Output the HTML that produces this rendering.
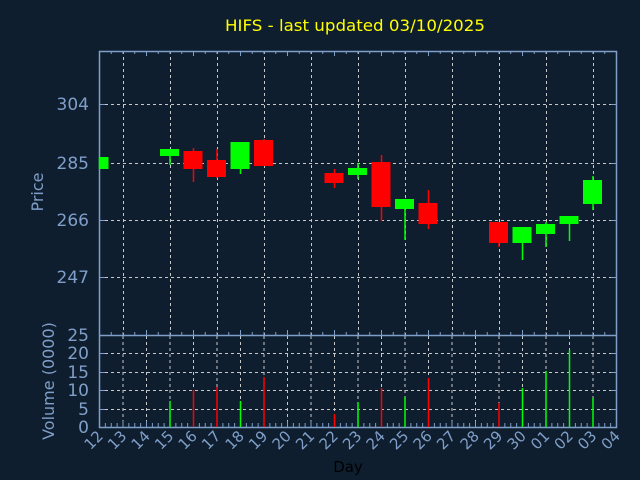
<!DOCTYPE html>
<html><head><meta charset="utf-8"><style>
html,body{margin:0;padding:0;background:#0f1e2f;}
svg{display:block;}
</style></head><body>
<svg width="640" height="480" xmlns="http://www.w3.org/2000/svg" font-family="'DejaVu Sans','Liberation Sans',sans-serif">
<rect width="640" height="480" fill="#0f1e2f"/>
<text x="355" y="31" fill="#ffff00" font-size="16" text-anchor="middle" textLength="260" lengthAdjust="spacingAndGlyphs">HIFS - last updated 03/10/2025</text>
<g id="grid" stroke="#c8c8c8" stroke-width="1" stroke-dasharray="3,3" fill="none">
<!-- price horizontal -->
<line x1="99" y1="104.5" x2="617" y2="104.5"/>
<line x1="99" y1="163.5" x2="617" y2="163.5"/>
<line x1="99" y1="220.5" x2="617" y2="220.5"/>
<line x1="99" y1="277.5" x2="617" y2="277.5"/>
<!-- price vertical every 2 days -->
<line x1="123.5" y1="51" x2="123.5" y2="335"/>
<line x1="170.5" y1="51" x2="170.5" y2="335"/>
<line x1="217.5" y1="51" x2="217.5" y2="335"/>
<line x1="264.5" y1="51" x2="264.5" y2="335"/>
<line x1="311.5" y1="51" x2="311.5" y2="335"/>
<line x1="358.5" y1="51" x2="358.5" y2="335"/>
<line x1="405.5" y1="51" x2="405.5" y2="335"/>
<line x1="452.5" y1="51" x2="452.5" y2="335"/>
<line x1="499.5" y1="51" x2="499.5" y2="335"/>
<line x1="546.5" y1="51" x2="546.5" y2="335"/>
<line x1="593.5" y1="51" x2="593.5" y2="335"/>
<!-- volume horizontal -->
<line x1="99" y1="353.5" x2="617" y2="353.5"/>
<line x1="99" y1="372.5" x2="617" y2="372.5"/>
<line x1="99" y1="390.5" x2="617" y2="390.5"/>
<line x1="99" y1="409.5" x2="617" y2="409.5"/>
</g>
<g stroke="#c8c8c8" stroke-width="1" stroke-dasharray="3,3" id="vv"></g>
<g stroke="#7f9fc8" stroke-width="1" id="ticks"></g>
<!-- frame -->
<rect x="99.5" y="51.5" width="517" height="376" fill="none" stroke="#7f9fc8" stroke-width="1.5"/>
<line x1="99" y1="335.5" x2="617" y2="335.5" stroke="#7f9fc8" stroke-width="1.5"/>
<!-- candles -->
<g id="c"></g>
<g id="v"></g>
<!-- labels -->
<g fill="#7f9fc8" font-size="17" text-anchor="end">
<text x="89" y="110">304</text>
<text x="89" y="169">285</text>
<text x="89" y="226">266</text>
<text x="89" y="283">247</text>
<text x="89" y="341">25</text>
<text x="89" y="359">20</text>
<text x="89" y="378">15</text>
<text x="89" y="396">10</text>
<text x="89" y="415">5</text>
<text x="89" y="433">0</text>
</g>
<text transform="translate(43,192) rotate(-90)" fill="#7f9fc8" font-size="16" text-anchor="middle">Price</text>
<text transform="translate(54,381) rotate(-90)" fill="#7f9fc8" font-size="16" text-anchor="middle">Volume (0000)</text>
<g id="dl" fill="#7f9fc8" font-size="15" text-anchor="end"></g>
<text x="348" y="472" fill="#000" font-size="15" text-anchor="middle">Day</text>
<script>
var ns="http://www.w3.org/2000/svg";
function el(p,t,a){var e=document.createElementNS(ns,t);for(var k in a)e.setAttribute(k,a[k]);document.getElementById(p).appendChild(e);return e;}
var X=function(i){return 99+23.5*i;};
for(var i=1;i<22;i++){el('vv','line',{x1:X(i)+.5,y1:336,x2:X(i)+.5,y2:427});}
for(var j=0;j<=44;j++){var x=99+11.75*j+.5;var maj=(j%4==0);
el('ticks','line',{x1:x,y1:51,x2:x,y2:maj?56:54});
el('ticks','line',{x1:x,y1:335,x2:x,y2:maj?330:332});}
for(var j=0;j<=88;j++){var x=99+5.875*j+.5;el('ticks','line',{x1:x,y1:427,x2:x,y2:(j%4==0)?421:423});}
[104,163,220,277,353,372,390,409].forEach(function(y){el('ticks','line',{x1:99,y1:y+.5,x2:105,y2:y+.5});el('ticks','line',{x1:611,y1:y+.5,x2:617,y2:y+.5});});
var G="#00ff00",R="#ff0000";
// [dayIndex, col, bodyTop, bodyBot, wickTop, wickBot]
var C=[[0,G,157,169,157,169],[3,G,149,156,149,165],[4,R,151,169,148,182],[5,R,160,177,149,178],[6,G,142,169,142,174],[7,R,140,166,139,166],
[10,R,173,183,169,188],[11,G,168,175,163,179],[12,R,162,207,155,221],[13,G,199,209,199,240],[14,R,203,224,190,229],
[17,R,222,243,222,247],[18,G,227,243,227,260],[19,G,224,234,222,247],[20,G,216,224,216,241],[21,G,180,204,176,210]];
C.forEach(function(c){var x=X(c[0]);
el('c','line',{x1:x+.5,y1:c[4],x2:x+.5,y2:c[5],stroke:c[1],'stroke-width':1.5});
var l=x-9.5,w=19;if(l<100){w=w-(100-l);l=100;}
el('c','rect',{x:l,y:c[2],width:w,height:c[3]-c[2],fill:c[1]});});
var V=[[3,G,401],[4,R,390],[5,R,387],[6,G,401],[7,R,377],[10,R,414],[11,G,402],[12,R,388],[13,G,397],[14,R,378],[17,R,403],[18,G,388],[19,G,371],[20,G,350],[21,G,398]];
V.forEach(function(v){el('v','line',{x1:X(v[0])+.5,y1:v[2],x2:X(v[0])+.5,y2:427,stroke:v[1],'stroke-width':1.5});});
var D=["12","13","14","15","16","17","18","19","20","21","22","23","24","25","26","27","28","29","30","01","02","03","04"];
D.forEach(function(d,i){var x=X(i)+5,y=437;var t=el('dl','text',{x:0,y:0,transform:'translate('+x+','+y+') rotate(-45)'});t.textContent=d;});
</script>
</svg>
</body></html>
